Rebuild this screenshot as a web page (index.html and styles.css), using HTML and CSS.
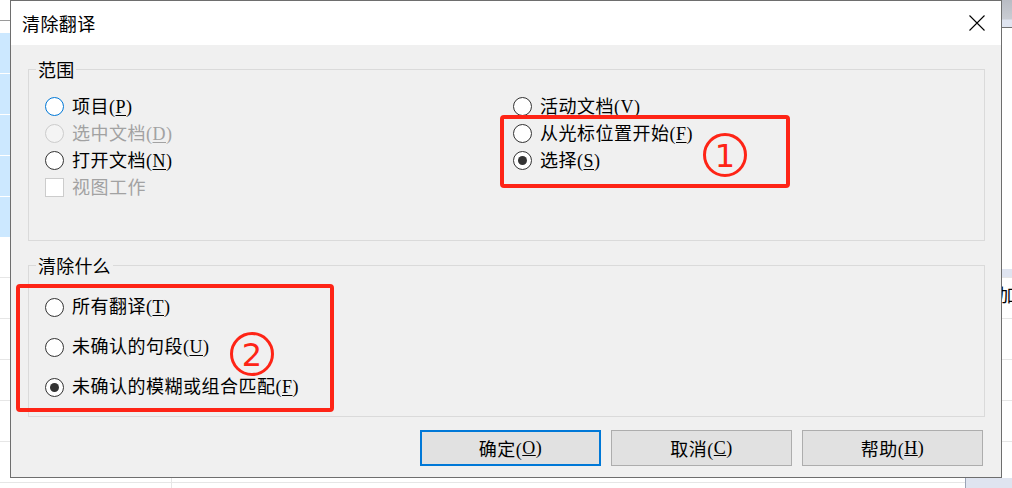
FILE: index.html
```html
<!DOCTYPE html>
<html lang="zh-CN">
<head>
<meta charset="utf-8">
<title>清除翻译</title>
<link rel="stylesheet" href="styles.css">
</head>
<body>
<div class="desk">
  <div class="bg-topline"></div>
  <div class="bg-list"></div>
  <div class="bg-rows"></div>
  <div class="bg-right-top"></div>
  <div class="bg-right-bar"></div>
  <div class="bg-right-char">加</div>
  <div class="bg-right-bottom"></div>
  <div class="bg-bottom-vline"></div>
</div>

<div class="dialog">
  <div class="titlebar">
    <span class="title">清除翻译</span>
    <span class="close">
      <svg width="16" height="16" viewBox="0 0 16 16"><path d="M0.5 0.5 L15.5 15.5 M15.5 0.5 L0.5 15.5" stroke="#000" stroke-width="1.1" fill="none"/></svg>
    </span>
  </div>
  <div class="body">
    <div class="group g1">
      <div class="legend">范围</div>
      <div class="cols">
        <div class="col">
          <div class="opt"><span class="radio focus"></span><span class="txt">项目(<u>P</u>)</span></div>
          <div class="opt dis"><span class="radio"></span><span class="txt">选中文档(<u>D</u>)</span></div>
          <div class="opt"><span class="radio"></span><span class="txt">打开文档(<u>N</u>)</span></div>
          <div class="opt dis"><span class="check"></span><span class="txt">视图工作</span></div>
        </div>
        <div class="col">
          <div class="opt"><span class="radio"></span><span class="txt">活动文档(<u>V</u>)</span></div>
          <div class="opt"><span class="radio"></span><span class="txt">从光标位置开始(<u>F</u>)</span></div>
          <div class="opt"><span class="radio on"></span><span class="txt">选择(<u>S</u>)</span></div>
        </div>
      </div>
    </div>
    <div class="group g2">
      <div class="legend">清除什么</div>
      <div class="col wide">
        <div class="opt"><span class="radio"></span><span class="txt">所有翻译(<u>T</u>)</span></div>
        <div class="opt"><span class="radio"></span><span class="txt">未确认的句段(<u>U</u>)</span></div>
        <div class="opt"><span class="radio on"></span><span class="txt">未确认的模糊或组合匹配(<u>F</u>)</span></div>
      </div>
    </div>
    <div class="buttons">
      <span class="btn default">确定(<u>O</u>)</span>
      <span class="btn">取消(<u>C</u>)</span>
      <span class="btn">帮助(<u>H</u>)</span>
    </div>
  </div>

  <div class="mark rect1"></div>
  <div class="mark rect2"></div>
  <div class="num n1"><span>1</span></div>
  <div class="num n2"><span>2</span></div>
</div>
</body>
</html>
```

FILE: styles.css
```css
html, body {
  margin: 0;
  padding: 0;
}
body {
  width: 1012px;
  height: 488px;
  overflow: hidden;
  position: relative;
  background: #ffffff;
  font-family: "Liberation Serif", "Noto Sans CJK SC", serif;
  font-size: 18px;
  color: #000;
}

/* background application behind the dialog */
.desk {
  position: absolute;
  inset: 0;
}
.bg-topline {
  position: absolute;
  left: 0; top: 20px; width: 12px; height: 1px;
  background: #9a9a9a;
}
.bg-list {
  position: absolute;
  left: 0; top: 33px; width: 12px; height: 204px;
  background: repeating-linear-gradient(to bottom, #cce8ff 0, #cce8ff 40px, #ffffff 40px, #ffffff 41px);
}
.bg-rows {
  position: absolute;
  left: 0; top: 237px; width: 1012px; height: 251px;
  background: repeating-linear-gradient(to bottom, transparent 0, transparent 40px, #e6e6e6 40px, #e6e6e6 41px);
}
.bg-right-top {
  position: absolute;
  left: 990px; top: 0; width: 22px; height: 28px;
  background: linear-gradient(to bottom, #b9bcc4 0, #c9ccd3 19px, #dfe4f0 20px, #dfe4f0 27px, #707070 27px, #707070 28px);
}
.bg-right-bar {
  position: absolute;
  left: 1000px; top: 269px; width: 12px; height: 8px;
  background: #dfe4f0;
}
.bg-right-char {
  position: absolute;
  left: 998px; top: 282px;
  font-family: "Noto Sans CJK SC", sans-serif;
  font-size: 18px;
  line-height: 24px;
}
.bg-right-bottom {
  position: absolute;
  left: 965px; top: 478px; width: 47px; height: 10px;
  background: #dfe4f0;
  border-left: 1px solid #9aa3b5;
}
.bg-bottom-vline {
  position: absolute;
  left: 171px; top: 478px; width: 1px; height: 10px;
  background: #e6e6e6;
}

/* dialog window */
.dialog {
  position: absolute;
  left: 10px;
  top: 0;
  width: 992px;
  height: 478px;
  box-sizing: border-box;
  border: 1px solid #6e6e6e;
  background: #f0f0f0;
  display: flex;
  flex-direction: column;
}
.titlebar {
  height: 44px;
  flex: none;
  background: #ffffff;
  display: flex;
  align-items: center;
  justify-content: space-between;
  padding: 0 16px 0 11px;
}
.title {
  font-family: "Noto Sans CJK SC", sans-serif;
  font-size: 18px;
  letter-spacing: 0.4px;
  line-height: 24px;
  margin-top: -1px;
}
.close {
  display: flex;
  width: 16px;
  height: 16px;
  margin-top: -1px;
}
.body {
  flex: 1;
  padding: 24px 16px 0 17px;
  display: flex;
  flex-direction: column;
}

.group {
  position: relative;
  box-sizing: border-box;
  border: 1px solid #dadada;
}
.g1 {
  height: 172px;
  padding: 23px 0 0 16px;
}
.g2 {
  height: 152px;
  margin-top: 24px;
  padding: 21px 0 0 16px;
}
.legend {
  position: absolute;
  left: 7px;
  top: -13px;
  padding: 0 2px;
  background: #f0f0f0;
  font-family: "Noto Sans CJK SC", sans-serif;
  font-size: 18px;
  letter-spacing: 0.2px;
  line-height: 24px;
}
.cols {
  display: grid;
  grid-template-columns: 468px 1fr;
}
.col {
  display: flex;
  flex-direction: column;
}
.opt {
  display: flex;
  align-items: center;
  height: 27px;
  gap: 8px;
}
.wide .opt {
  height: 40px;
}
.txt {
  letter-spacing: 0.5px;
  line-height: 24px;
  white-space: nowrap;
}
.txt u {
  text-underline-offset: 2px;
}
.dis .txt {
  color: #a2a2a2;
}
.radio {
  width: 19px;
  height: 19px;
  flex: none;
  box-sizing: border-box;
  border: 1px solid #333333;
  border-radius: 50%;
  background: #ffffff;
  position: relative;
}
.radio.focus {
  border-color: #0078d7;
}
.dis .radio {
  border-color: #cccccc;
  background: #f4f4f4;
}
.radio.on::after {
  content: "";
  position: absolute;
  inset: 4px;
  border-radius: 50%;
  background: #333333;
}
.check {
  width: 19px;
  height: 19px;
  flex: none;
  box-sizing: border-box;
  border: 1px solid #cccccc;
  background: #ffffff;
}

.buttons {
  display: flex;
  justify-content: flex-end;
  gap: 10px;
  margin-top: 13px;
  padding-right: 2px;
}
.btn {
  width: 181px;
  height: 36px;
  box-sizing: border-box;
  border: 1px solid #adadad;
  background: #e1e1e1;
  display: flex;
  align-items: center;
  justify-content: center;
  letter-spacing: 0.5px;
}
.btn.default {
  border: 2px solid #0078d7;
}

/* red annotation overlays */
.mark {
  position: absolute;
  box-sizing: border-box;
  border: 4px solid #fe2416;
  border-radius: 4px;
}
.rect1 {
  left: 489px;
  top: 114px;
  width: 290px;
  height: 73px;
}
.rect2 {
  left: 5px;
  top: 283px;
  width: 318px;
  height: 128px;
}
.num {
  position: absolute;
  width: 44px;
  height: 44px;
  box-sizing: border-box;
  border: 3px solid #fe2416;
  border-radius: 50%;
  display: flex;
  align-items: center;
  justify-content: center;
  font-family: "DejaVu Sans", sans-serif;
  font-size: 32px;
  line-height: 32px;
  color: #fe2416;
}
.num span {
  display: block;
  height: 32px;
  margin-top: 1px;
}
.n1 {
  left: 692px;
  top: 132px;
}
.n2 {
  left: 219px;
  top: 331px;
}
```
